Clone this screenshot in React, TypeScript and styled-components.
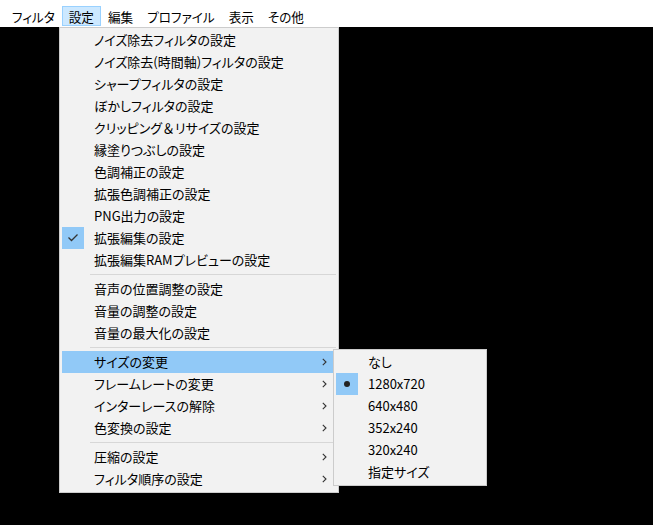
import React from "react";
import styled, { createGlobalStyle } from "styled-components";

const GlobalStyle = createGlobalStyle`
  html, body {
    margin: 0;
    padding: 0;
    background: #000;
  }
  body {
    font-family: "Noto Sans CJK JP", "Noto Sans", sans-serif;
    font-feature-settings: "palt";
  }
`;

const Screen = styled.div`
  position: relative;
  width: 653px;
  height: 525px;
  background: #000;
  overflow: hidden;
`;

const MenuBar = styled.div`
  display: flex;
  align-items: flex-end;
  height: 27px;
  padding-left: 5px;
  background: #fff;
  box-sizing: border-box;
`;

const BarItem = styled.div<{ $active?: boolean }>`
  display: flex;
  align-items: center;
  height: 20px;
  margin-bottom: 1px;
  padding: 0 6px;
  font-size: 12.6px;
  color: #000;
  white-space: nowrap;
  box-sizing: border-box;
  border: 1px solid ${p => (p.$active ? "#99d1ff" : "transparent")};
  background: ${p => (p.$active ? "#cce8ff" : "transparent")};
`;

const Menu = styled.div<{ $left: number; $top: number; $width: number }>`
  position: absolute;
  left: ${p => p.$left}px;
  top: ${p => p.$top}px;
  width: ${p => p.$width}px;
  padding: 1px 2px 2px;
  box-sizing: border-box;
  background: #f2f2f2;
  border: 1px solid #cccccc;
`;

const Item = styled.div<{ $hover?: boolean }>`
  display: flex;
  align-items: center;
  height: 22px;
  font-size: 13px;
  color: #000;
  background: ${p => (p.$hover ? "#91c9f7" : "transparent")};
`;

const Mark = styled.div<{ $on?: boolean }>`
  display: flex;
  align-items: center;
  justify-content: center;
  flex: 0 0 22px;
  height: 22px;
  background: ${p => (p.$on ? "#91c9f7" : "transparent")};
`;

const Label = styled.span`
  flex: 1;
  margin-left: 10px;
  white-space: nowrap;
  line-height: 22px;
`;

// full-width glyphs that keep their full advance
const Wide = styled.span`
  font-feature-settings: normal;
`;

const Arrow = styled.span`
  display: flex;
  align-items: center;
  margin-right: 9px;
`;

const Separator = styled.div`
  height: 1px;
  margin: 3px 0 3px 28px;
  background: #d7d7d7;
`;

const Check = () => (
  <svg width="22" height="22" viewBox="0 0 22 22">
    <polyline
      points="6.5,10.5 9.5,13.5 15.5,7.5"
      fill="none"
      stroke="#333"
      strokeWidth="1.3"
    />
  </svg>
);

const Bullet = () => (
  <svg width="22" height="22" viewBox="0 0 22 22">
    <circle cx="11" cy="11" r="3" fill="#222" />
  </svg>
);

const Chevron = () => (
  <svg width="5" height="8" viewBox="0 0 5 8">
    <polyline points="0.8,0.8 4,4 0.8,7.2" fill="none" stroke="#333" strokeWidth="1.1" />
  </svg>
);

type Entry =
  | { sep: true }
  | { label: React.ReactNode; checked?: boolean; sub?: boolean; hover?: boolean };

const settings: Entry[] = [
  { label: "ノイズ除去フィルタの設定" },
  { label: "ノイズ除去(時間軸)フィルタの設定" },
  { label: "シャープフィルタの設定" },
  { label: "ぼかしフィルタの設定" },
  {
    label: (
      <>
        クリッピング<Wide>＆</Wide>リサイズの設定
      </>
    ),
  },
  { label: "縁塗りつぶしの設定" },
  { label: "色調補正の設定" },
  { label: "拡張色調補正の設定" },
  { label: "PNG出力の設定" },
  { label: "拡張編集の設定", checked: true },
  { label: "拡張編集RAMプレビューの設定" },
  { sep: true },
  { label: "音声の位置調整の設定" },
  { label: "音量の調整の設定" },
  { label: "音量の最大化の設定" },
  { sep: true },
  { label: "サイズの変更", sub: true, hover: true },
  { label: "フレームレートの変更", sub: true },
  { label: "インターレースの解除", sub: true },
  { label: "色変換の設定", sub: true },
  { sep: true },
  { label: "圧縮の設定", sub: true },
  { label: "フィルタ順序の設定", sub: true },
];

const sizes = [
  { label: "なし" },
  { label: "1280x720", selected: true },
  { label: "640x480" },
  { label: "352x240" },
  { label: "320x240" },
  { label: "指定サイズ" },
];

const bar = ["フィルタ", "設定", "編集", "プロファイル", "表示", "その他"];

export default function App() {
  return (
    <Screen>
      <GlobalStyle />
      <MenuBar>
        {bar.map(b => (
          <BarItem key={b} $active={b === "設定"}>
            {b}
          </BarItem>
        ))}
      </MenuBar>

      <Menu $left={59} $top={27} $width={280}>
        {settings.map((e, i) => {
          if ("sep" in e) return <Separator key={i} />;
          return (
            <Item key={i} $hover={e.hover}>
              <Mark $on={e.checked}>{e.checked && <Check />}</Mark>
              <Label>{e.label}</Label>
              {e.sub && (
                <Arrow>
                  <Chevron />
                </Arrow>
              )}
            </Item>
          );
        })}
      </Menu>

      <Menu $left={333} $top={349} $width={154}>
        {sizes.map(s => (
          <Item key={s.label}>
            <Mark $on={s.selected}>{s.selected && <Bullet />}</Mark>
            <Label>{s.label}</Label>
          </Item>
        ))}
      </Menu>
    </Screen>
  );
}
